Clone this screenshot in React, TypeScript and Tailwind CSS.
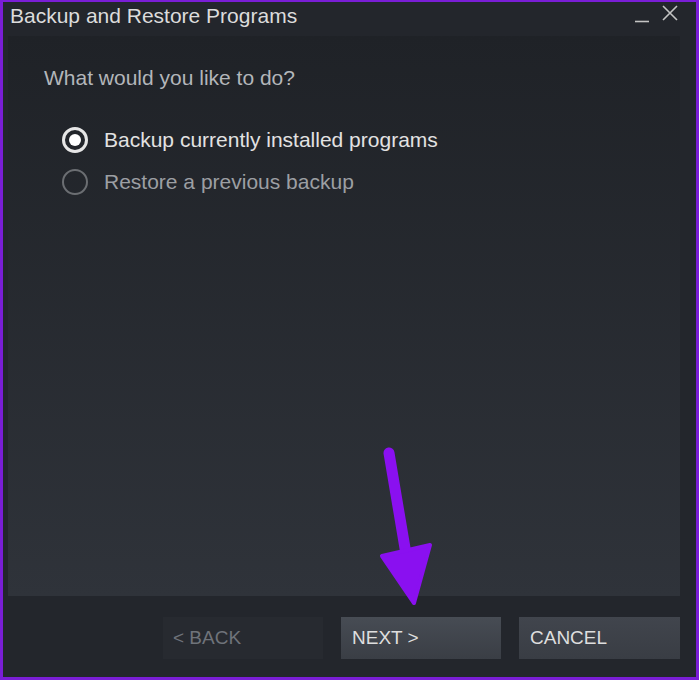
import React from "react";

const font = { fontFamily: '"Liberation Sans", Arial, sans-serif' };

export default function App() {
  return (
    <div
      className="relative w-[699px] h-[680px] bg-[#7a1ed6] pt-[2px] pl-[3px] pr-[3px] pb-[3px]"
      style={font}
    >
      <div className="flex flex-col w-full h-full bg-[#23262c]">
        {/* Title bar */}
        <div className="flex items-start justify-between h-[34px] pl-[7px] pr-[17px]">
          <div className="text-[21px] leading-[28px] text-[#dcdcdc]">Backup and Restore Programs</div>
          <div className="flex items-start gap-[10px] pt-[2px]">
            <svg width="18" height="20" viewBox="0 0 18 20" className="mt-[1px]">
              <path d="M2 16.5h14" stroke="#c4c4c4" strokeWidth="1.6" />
            </svg>
            <svg width="18" height="18" viewBox="0 0 18 18">
              <path d="M2 2l14 14M16 2L2 16" stroke="#c4c4c4" strokeWidth="1.6" />
            </svg>
          </div>
        </div>

        {/* Content panel */}
        <div className="ml-[5px] mr-[16px] h-[560px] bg-gradient-to-b from-[#1f2227] to-[#2f333a] pt-[29px] pl-[36px]">
          <div className="text-[21px] leading-[26px] text-[#b3b6ba]">What would you like to do?</div>
          <div className="flex flex-col gap-[16px] mt-[36px] pl-[18px]">
            <label className="flex items-center gap-[16px]">
              <span className="flex items-center justify-center w-[26px] h-[26px] rounded-full border-[3px] border-[#e6e6e6]">
                <span className="w-[12px] h-[12px] rounded-full bg-white" />
              </span>
              <span className="text-[21px] leading-[26px] text-[#e2e2e2]">Backup currently installed programs</span>
            </label>
            <label className="flex items-center gap-[16px]">
              <span className="w-[26px] h-[26px] rounded-full border-[2px] border-[#6b6e72]" />
              <span className="text-[21px] leading-[26px] text-[#9c9fa3]">Restore a previous backup</span>
            </label>
          </div>
        </div>

        {/* Footer */}
        <div className="flex justify-end gap-[18px] mt-[21px] pr-[16px]">
          <div className="flex items-center w-[160px] h-[42px] bg-[#272a30] pl-[10px] text-[19px] text-[#6f737a]">
            &lt; BACK
          </div>
          <div className="flex items-center w-[160px] h-[42px] bg-gradient-to-b from-[#474c54] to-[#3a3e45] pl-[11px] text-[19px] text-[#dedede]">
            NEXT &gt;
          </div>
          <div className="flex items-center w-[161px] h-[42px] bg-gradient-to-b from-[#41454d] to-[#393d44] pl-[11px] text-[19px] text-[#dedede]">
            CANCEL
          </div>
        </div>
      </div>

      {/* Annotation arrow */}
      <svg className="absolute left-0 top-0 pointer-events-none" width="699" height="680">
        <path d="M389 453L407 560" stroke="#8a10f0" strokeWidth="11" strokeLinecap="round" fill="none" />
        <path d="M382 556L430 545L414 603Z" fill="#8a10f0" stroke="#8a10f0" strokeWidth="4" strokeLinejoin="round" />
      </svg>
    </div>
  );
}
